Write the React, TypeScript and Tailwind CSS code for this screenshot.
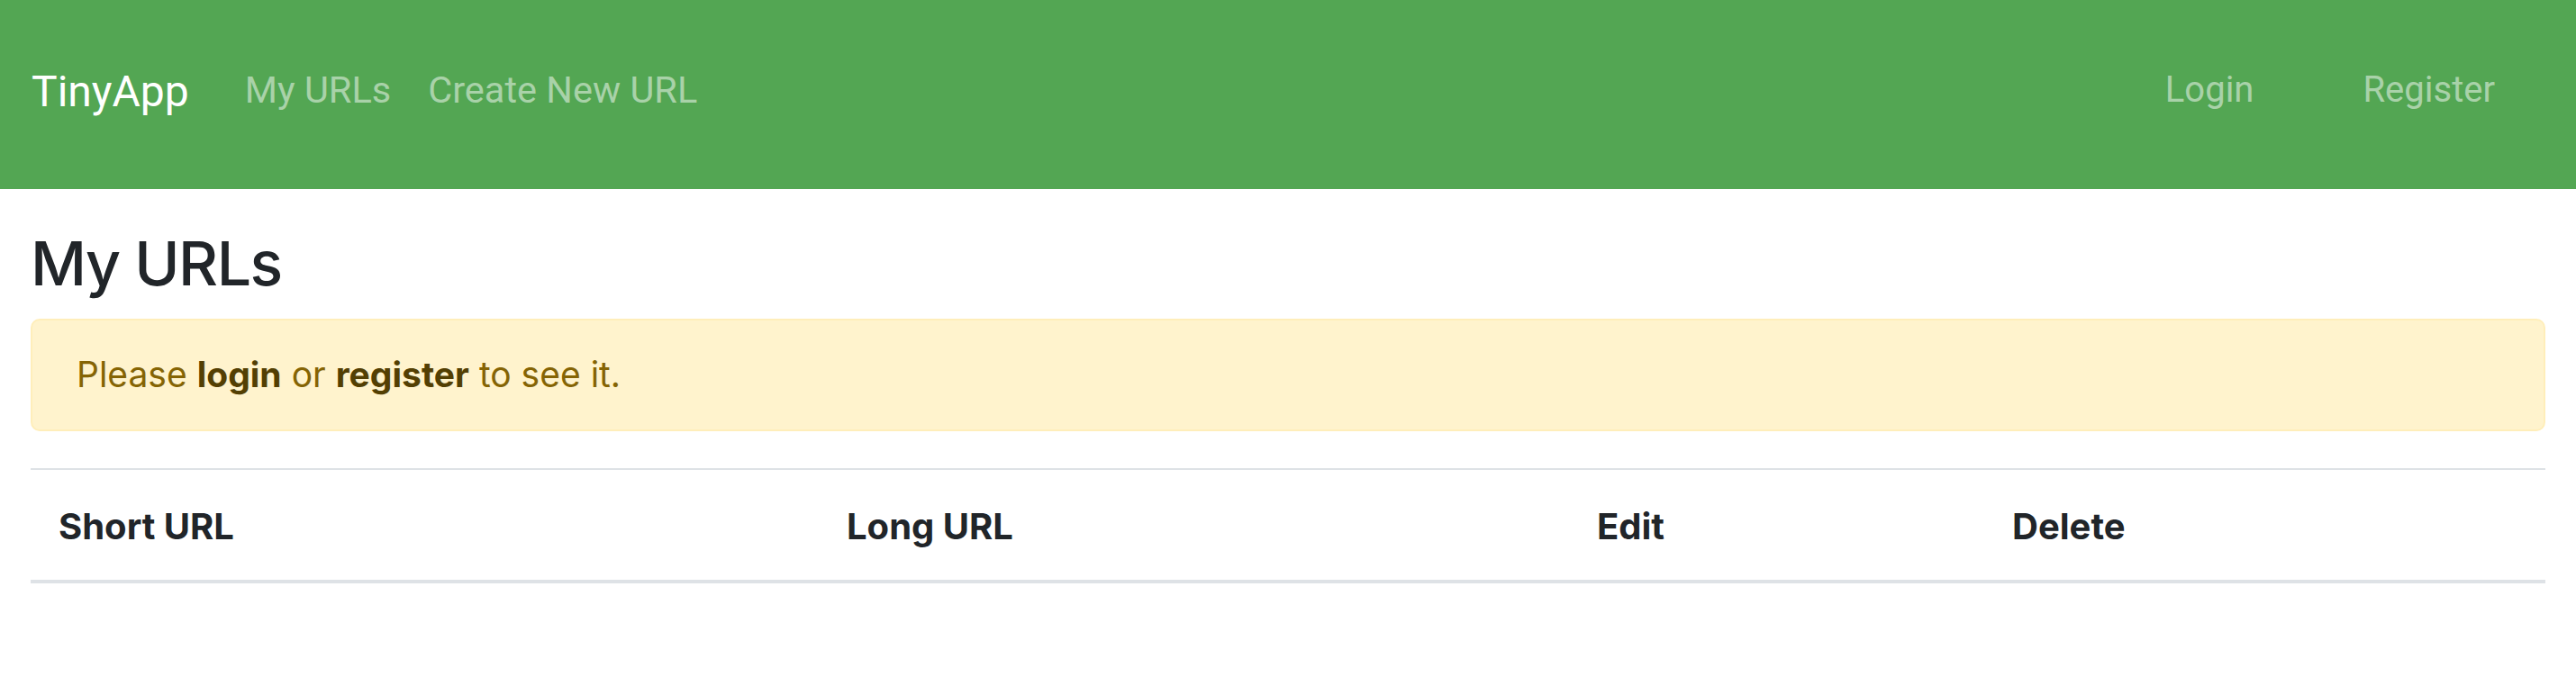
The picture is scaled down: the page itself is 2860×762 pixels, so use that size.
import React from 'react';

const App: React.FC = () => {
    return (
        <div className="min-h-[762px] bg-white">
            <nav className="h-[210px] bg-[#53a653] flex items-center pl-[35px] pr-[90px] font-['Roboto',sans-serif]">
                <a className="text-white text-[48px] leading-none pb-[7px] mr-[62px]">TinyApp</a>
                <a className="text-white/50 text-[41.5px] leading-none pb-[10px]">My URLs</a>
                <a className="text-white/50 text-[41.5px] leading-none pb-[10px] ml-[41px]">Create New URL</a>
                <div className="ml-auto flex items-center">
                    <a className="text-white/50 text-[40px] leading-none pb-[10px]">Login</a>
                    <a className="text-white/50 text-[40px] leading-none pb-[10px] ml-[121px]">Register</a>
                </div>
            </nav>
            <main className="px-[34px] font-['Inter',sans-serif] text-[#212529]">
                <h1 className="mt-[42px] mb-[20px] text-[68px] font-medium leading-[1.2] tracking-[-1.5px]">My URLs</h1>
                <div className="border-2 border-[#ffeeba] bg-[#fff3cd] rounded-[10px] pt-[32px] pb-[32px] px-[49px] text-[39px] leading-[1.46] text-[#856404]">
                    Please <b className="font-bold text-[#533f03]">login</b> or <b className="font-bold text-[#533f03]">register</b> to see it.
                </div>
                <table className="mt-[41px] w-full table-fixed border-collapse text-[40px] leading-[1.4]">
                    <thead>
                        <tr className="border-t-2 border-b-4 border-[#dee2e6]">
                            <th className="w-[875px] text-left font-bold pl-[31px] pt-[35px] pb-[31px]">Short URL</th>
                            <th className="w-[833px] text-left font-bold pl-[31px] pt-[35px] pb-[31px]">Long URL</th>
                            <th className="w-[461px] text-left font-bold pl-[31px] pt-[35px] pb-[31px]">Edit</th>
                            <th className="text-left font-bold pl-[31px] pt-[35px] pb-[31px]">Delete</th>
                        </tr>
                    </thead>
                    <tbody></tbody>
                </table>
            </main>
        </div>
    );
};

export default App;
